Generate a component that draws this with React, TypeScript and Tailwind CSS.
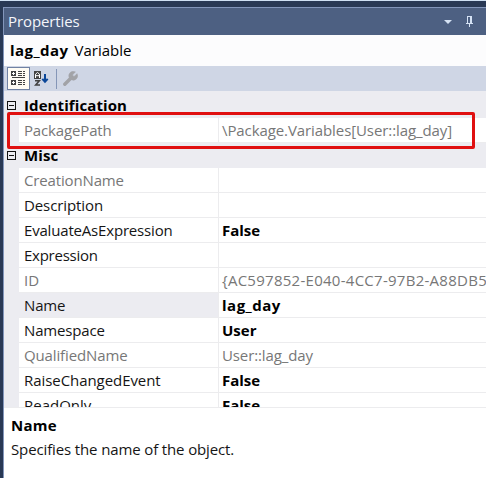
type Row = { name: string; value?: string; nameTrack?: string; valueTrack?: string; muted?: boolean; selected?: boolean };

const packagePath: Row = {
  name: "PackagePath",
  value: "\\Package.Variables[User::lag_day]",
  nameTrack: "tracking-[-0.15px]",
  valueTrack: "tracking-[-0.09px]",
  muted: true,
};

const rows: Row[] = [
  { name: "CreationName", nameTrack: "tracking-[-0.15px]", muted: true },
  { name: "Description", nameTrack: "tracking-[-0.1px]" },
  { name: "EvaluateAsExpression", value: "False", nameTrack: "tracking-[-0.18px]" },
  { name: "Expression", nameTrack: "tracking-[-0.25px]" },
  { name: "ID", value: "{AC597852-E040-4CC7-97B2-A88DB5", valueTrack: "tracking-[0.27px]", muted: true },
  { name: "Name", value: "lag_day", nameTrack: "tracking-[-0.15px]", valueTrack: "tracking-[0.5px]", selected: true },
  { name: "Namespace", value: "User", nameTrack: "tracking-[-0.15px]" },
  { name: "QualifiedName", value: "User::lag_day", nameTrack: "tracking-[-0.13px]", valueTrack: "tracking-[-0.12px]", muted: true },
  { name: "RaiseChangedEvent", value: "False", nameTrack: "tracking-[-0.06px]" },
  { name: "ReadOnly", value: "False" },
];

function Category({ title }: { title: string }) {
  return (
    <div className="flex h-[25px] shrink-0 items-center bg-[#ececf1] pl-[3px]">
      <svg className="mb-px h-[9px] w-[9px]" viewBox="0 0 9 9" shapeRendering="crispEdges">
        <path d="M.5.5h8v8h-8zM2 4.5h5" fill="none" stroke="#111" />
      </svg>
      <span className="mb-0.5 ml-2 font-bold tracking-[0.1px] text-black">{title}</span>
    </div>
  );
}

function PropertyRow({ row }: { row: Row }) {
  return (
    <div className="flex h-[25px] shrink-0 bg-[#ececf1] pl-[15px]">
      <div
        className={`flex w-[200px] shrink-0 items-center border-r border-b border-[#ececee] pl-[5px] ${row.selected ? "bg-[#ececf1]" : "bg-white"} ${row.muted ? "text-[#777]" : "text-[#151515]"}`}
      >
        <span className={row.nameTrack ?? ""}>{row.name}</span>
      </div>
      <div
        className={`flex min-w-0 flex-1 items-center overflow-hidden border-b border-[#ececee] bg-white pl-[3px] ${row.muted ? "text-[#777]" : "font-bold text-black"}`}
      >
        <span className={row.valueTrack ?? ""}>{row.value}</span>
      </div>
    </div>
  );
}

export default function App() {
  return (
    <div className="relative flex h-[478px] w-[486px] flex-col overflow-hidden border-t border-[#cfe0f3] bg-[#293955] pt-[6px] font-['Open_Sans','Noto_Sans',sans-serif] text-[15px] leading-5 whitespace-nowrap">
      <div className="ml-[3px] flex min-h-0 flex-1 flex-col border-t border-l border-[#8396bb] bg-white">
        <header className="flex h-[27px] shrink-0 items-center bg-[#4d6082] pl-1 text-[#f4f6fa]">
          <span className="mb-0.5 tracking-[-0.1px]">Properties</span>
          <svg className="ml-auto h-1 w-2" viewBox="0 0 8 4">
            <path d="M0 0h8L4 4z" fill="#d5e2f4" />
          </svg>
          <svg className="mr-[13px] ml-[14px] h-[11px] w-[7px]" viewBox="0 0 7 11" shapeRendering="crispEdges">
            <path d="M1.5 7V.5h4V7M4.5 1v6M0 7.5h7M3.5 8v3" fill="none" stroke="#d5e2f4" />
          </svg>
        </header>
        <div className="flex h-[31px] shrink-0 items-center gap-[6px] bg-[#fcfcfd] pb-0.5 pl-[6px] text-black">
          <b className="tracking-[0.45px]">lag_day</b>
          <span>Variable</span>
        </div>
        <div className="flex h-[25px] shrink-0 items-center bg-[#cfd6e5] pl-[3px]">
          <div className="flex h-[23px] w-[23px] items-center justify-center border border-[#7182a3] bg-[#fffcf4]">
            <svg className="h-[15px] w-[15px]" viewBox="0 0 15 15" shapeRendering="crispEdges">
              <path d="M0 0h5v5H0zM0 9h5v5H0z" fill="#424242" />
              <path d="M1 2.5h3M2.5 1v3M1 11.5h3M2.5 10v3" stroke="#fff" />
              <path d="M7 .5h4M12 .5h2M7 2.5h4M12 2.5h2M7 4.5h4M12 4.5h2M1 6.5h13M7 9.5h4M12 9.5h2M7 11.5h4M12 11.5h2M7 13.5h4M12 13.5h2" stroke="#424242" />
            </svg>
          </div>
          <svg className="ml-1 h-[15px] w-[15px]" viewBox="0 0 15 15">
            <path d="M0 0h7v8H0z" fill="#424242" />
            <path d="M1.5 7V3.2l2-1.7 2 1.7V7M2 4.7h3" fill="none" stroke="#fff" />
            <path d="M1 9.7h4.3L1.7 14H6" fill="none" stroke="#424242" strokeWidth="1.6" />
            <path d="M11 3v8M8.3 7.8 11 10.8l2.7-3" fill="none" stroke="#0b4799" strokeWidth="2" />
          </svg>
          <div className="ml-[7px] h-5 w-px bg-[#8596b7]" />
          <svg className="mb-px ml-[6px] h-[15px] w-[15px]" viewBox="0 0 15 15">
            <path d="M1.8 13.2 8.5 6.5" stroke="#a2a3a7" strokeWidth="3.4" strokeLinecap="round" />
            <path d="M12.4 1 9.8 3.5v1.7h1.7L14 2.7A4.3 4.3 0 0 1 8 8.5 4.3 4.3 0 0 1 12.4 1z" fill="#a2a3a7" stroke="#a2a3a7" strokeWidth=".6" />
          </svg>
        </div>
        <div className="flex h-[317px] shrink-0 flex-col overflow-hidden border-b border-[#ececee] bg-[#ececf1] pt-[2px]">
          <Category title="Identification" />
          <PropertyRow row={packagePath} />
          <Category title="Misc" />
          {rows.map((row) => (
            <PropertyRow key={row.name} row={row} />
          ))}
        </div>
        <div className="flex flex-1 flex-col bg-white pt-[7px] pl-[7px] text-[#151515]">
          <b className="h-6 tracking-[0.25px] text-black">Name</b>
          <span className="tracking-[-0.13px]">Specifies the name of the object.</span>
        </div>
      </div>
      <div className="absolute top-[111px] left-[7px] h-[37px] w-[468px] rounded-xs border-3 border-[#e01010]" />
    </div>
  );
}
